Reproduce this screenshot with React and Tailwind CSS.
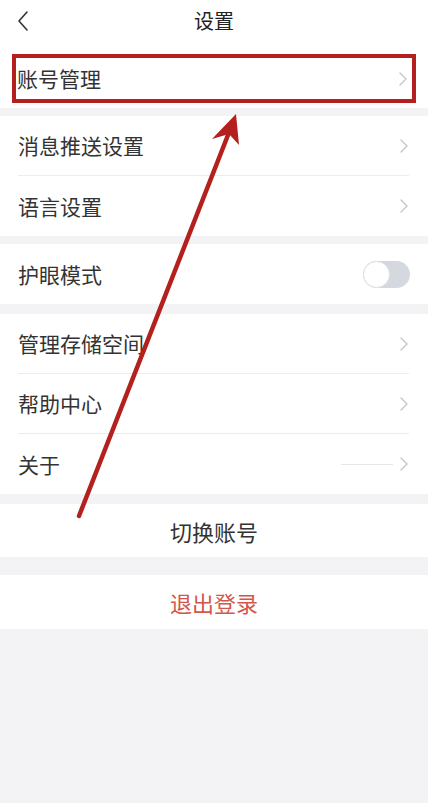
import { useState } from 'react'

const FONT = { fontFamily: '"Noto Sans CJK SC", "Noto Sans", sans-serif' }

function Chevron() {
    return (
        <svg width="10" height="16" viewBox="0 0 10 16" className="shrink-0">
            <path d="M2 2 L8 8 L2 14" fill="none" stroke="#c4c4c8" strokeWidth="1.3" strokeLinecap="round" strokeLinejoin="round" />
        </svg>
    )
}

function Row({ label, divider = false, extra = null }) {
    return (
        <div className="h-[60px] bg-white pl-[18px] pr-[19px]">
            <div className={`h-full flex items-center justify-between ${divider ? 'border-b border-[#ececef]' : ''}`}>
                <span className="text-[21px] text-[#333333] leading-none">{label}</span>
                <div className="flex items-center gap-[6px]">
                    {extra}
                    <Chevron />
                </div>
            </div>
        </div>
    )
}

function Toggle() {
    const [on, setOn] = useState(false)
    return (
        <button
            onClick={() => setOn(!on)}
            className={`w-[47px] h-[27px] rounded-full flex items-center ${on ? 'bg-[#3b82f6] justify-end' : 'bg-[#d5d8df] justify-start'}`}
        >
            <span className="w-[27px] h-[27px] rounded-full bg-white border border-[#dfe1e6]" />
        </button>
    )
}

export default function App() {
    return (
        <div className="relative min-h-[803px] w-full bg-[#f3f3f5]" style={FONT}>
            {/* header */}
            <div className="h-[42px] bg-white grid grid-cols-3 items-center px-[16px]">
                <svg width="14" height="22" viewBox="0 0 14 22">
                    <path d="M11 2 L3 11 L11 20" fill="none" stroke="#333" strokeWidth="1.6" strokeLinecap="round" strokeLinejoin="round" />
                </svg>
                <div className="text-center text-[20px] text-[#222] leading-none">设置</div>
                <div />
            </div>

            {/* account management, highlighted */}
            <div className="h-[66px] bg-white px-[12px] pt-[12px] pb-[5px]">
                <div className="h-full border-[4px] border-[#b3201e] flex items-center justify-between pl-[1px] pr-[4px]">
                    <span className="text-[21px] text-[#333333] leading-none">账号管理</span>
                    <Chevron />
                </div>
            </div>

            <div className="h-[8px]" />
            <Row label="消息推送设置" divider />
            <Row label="语言设置" />

            <div className="h-[8px]" />
            <div className="h-[60px] bg-white pl-[18px] pr-[18px] flex items-center justify-between">
                <span className="text-[21px] text-[#333333] leading-none">护眼模式</span>
                <Toggle />
            </div>

            <div className="h-[10px]" />
            <Row label="管理存储空间" divider />
            <Row label="帮助中心" divider />
            <Row label="关于" extra={<span className="block w-[52px] h-px bg-[#e6e6ea]" />} />

            <div className="h-[10px]" />
            <div className="h-[53px] bg-white flex items-center justify-center">
                <span className="text-[22px] text-[#333333] leading-none">切换账号</span>
            </div>

            <div className="h-[18px]" />
            <div className="h-[54px] bg-white flex items-center justify-center">
                <span className="text-[22px] text-[#d3564d] leading-none">退出登录</span>
            </div>

            {/* annotation arrow */}
            <svg className="absolute inset-0 pointer-events-none" width="428" height="803" viewBox="0 0 428 803">
                <line x1="79" y1="516" x2="228" y2="135" stroke="#b3201e" strokeWidth="4.5" strokeLinecap="round" />
                <polygon points="236,114 239,145 229,134 212,139" fill="#b3201e" />
            </svg>
        </div>
    )
}
